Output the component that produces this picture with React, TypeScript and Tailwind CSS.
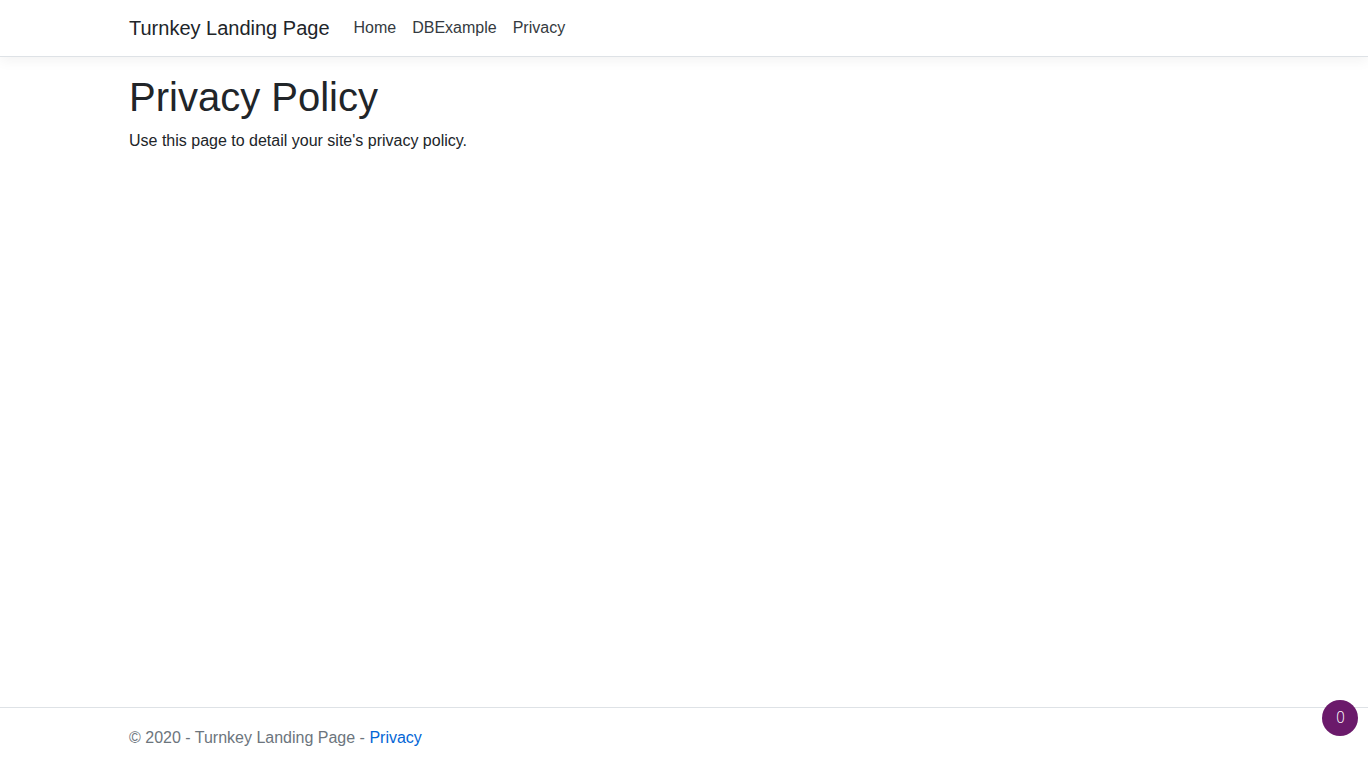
export default function App() {
  return (
    <div className="flex min-h-screen flex-col bg-white font-['Liberation_Sans',Arial,sans-serif] text-base text-[#212529]">
      <header>
        <nav className="mb-4 border-b border-[#dee2e6] bg-white py-2 shadow-[0_0.25rem_0.75rem_rgba(0,0,0,0.05)]">
          <div className="mx-auto flex w-[1140px] items-center px-[15px]">
            <a className="mr-4 py-[5px] text-xl leading-[30px] text-[#212529]" href="#">
              Turnkey Landing Page
            </a>
            <ul className="flex">
              <li>
                <a className="block px-2 py-2 leading-6 text-[#343a40]" href="#">
                  Home
                </a>
              </li>
              <li>
                <a className="block px-2 py-2 leading-6 text-[#343a40]" href="#">
                  DBExample
                </a>
              </li>
              <li>
                <a className="block px-2 py-2 leading-6 text-[#343a40]" href="#">
                  Privacy
                </a>
              </li>
            </ul>
          </div>
        </nav>
      </header>

      <main className="mx-auto w-[1140px] px-[15px] pb-3">
        <h1 className="mb-2 text-[40px] leading-[1.2] font-medium">Privacy Policy</h1>
        <p className="leading-6">Use this page to detail your site's privacy policy.</p>
      </main>

      <footer className="mt-auto border-t border-[#dee2e6] leading-[60px] text-[#6c757d]">
        <div className="mx-auto w-[1140px] px-[15px]">
          &copy; 2020 - Turnkey Landing Page -{" "}
          <a className="text-[#0366d6]" href="#">
            Privacy
          </a>
        </div>
      </footer>

      <div className="fixed right-[10px] bottom-[32px] flex h-9 w-9 items-center justify-center rounded-full bg-[#6b1a6b] pl-px font-['DejaVu_Sans',sans-serif] text-[15px] font-light text-white">
        0
      </div>
    </div>
  );
}
